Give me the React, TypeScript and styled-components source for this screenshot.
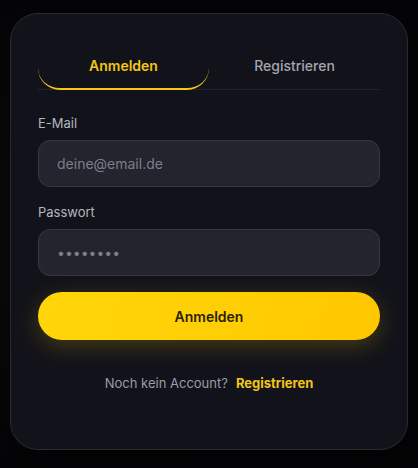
import React, { useState } from 'react';
import styled, { createGlobalStyle } from 'styled-components';

const GlobalStyle = createGlobalStyle`
  html, body {
    margin: 0;
    padding: 0;
    background: #060609;
    font-family: Inter, "Noto Sans", sans-serif;
  }
`;

const Page = styled.div`
  width: 418px;
  height: 468px;
  box-sizing: border-box;
  padding: 13px 10px 18px;
  background: radial-gradient(ellipse at 20% 50%, #0d0d10 0%, #050507 70%);
`;

const Card = styled.div`
  box-sizing: border-box;
  height: 437px;
  padding: 28px 27px 0;
  background: #12131a;
  border: 1px solid #2a2b33;
  border-radius: 28px;
  box-shadow: 0 10px 40px rgba(0, 0, 0, 0.6);
  display: flex;
  flex-direction: column;
`;

const Tabs = styled.div`
  display: grid;
  grid-template-columns: 1fr 1fr;
  border-bottom: 1px solid #22232b;
`;

const Tab = styled.button<{ $active?: boolean }>`
  height: 48px;
  background: none;
  border: none;
  border-bottom: 2px solid ${({ $active }) => ($active ? '#f5c817' : 'transparent')};
  border-radius: 0 0 22px 22px;
  font-family: inherit;
  font-size: 14px;
  font-weight: ${({ $active }) => ($active ? 600 : 500)};
  color: ${({ $active }) => ($active ? '#f2c617' : '#a4a6b0')};
  cursor: pointer;
  margin-bottom: -1px;
  padding: 0;
`;

const Form = styled.div`
  display: flex;
  flex-direction: column;
  margin-top: 24px;
`;

const Field = styled.div`
  display: flex;
  flex-direction: column;
  gap: 8px;
  margin-bottom: 16px;
`;

const Label = styled.label`
  font-size: 13px;
  line-height: 18px;
  color: #b4b6bf;
`;

const Input = styled.input`
  box-sizing: border-box;
  height: 47px;
  padding: 0 18px;
  background: #23242d;
  border: 1px solid #363741;
  border-radius: 12px;
  font-family: inherit;
  font-size: 14px;
  color: #d0d2da;
  outline: none;

  &::placeholder {
    color: #7c7e89;
  }
`;

const Submit = styled.button`
  height: 48px;
  border: none;
  border-radius: 24px;
  background: linear-gradient(100deg, #ffd60a 0%, #ffcf05 50%, #ffc700 100%);
  box-shadow: 0 6px 22px rgba(255, 200, 0, 0.22);
  font-family: inherit;
  font-size: 14px;
  font-weight: 600;
  color: #2a2208;
  cursor: pointer;
`;

const Footer = styled.div`
  margin-top: 35px;
  text-align: center;
  font-size: 13px;
  color: #9a9ca6;
  display: flex;
  justify-content: center;
  gap: 8px;
`;

const Link = styled.a`
  color: #f2c617;
  font-weight: 700;
  cursor: pointer;
`;

export default function App() {
  const [tab, setTab] = useState<'login' | 'register'>('login');

  return (
    <>
      <GlobalStyle />
      <Page>
        <Card>
          <Tabs>
            <Tab $active={tab === 'login'} onClick={() => setTab('login')}>
              Anmelden
            </Tab>
            <Tab $active={tab === 'register'} onClick={() => setTab('register')}>
              Registrieren
            </Tab>
          </Tabs>
          <Form>
            <Field>
              <Label>E-Mail</Label>
              <Input type="email" placeholder="deine@email.de" />
            </Field>
            <Field>
              <Label>Passwort</Label>
              <Input type="password" placeholder="••••••••" />
            </Field>
            <Submit>Anmelden</Submit>
          </Form>
          <Footer>
            <span>Noch kein Account?</span>
            <Link onClick={() => setTab('register')}>Registrieren</Link>
          </Footer>
        </Card>
      </Page>
    </>
  );
}
